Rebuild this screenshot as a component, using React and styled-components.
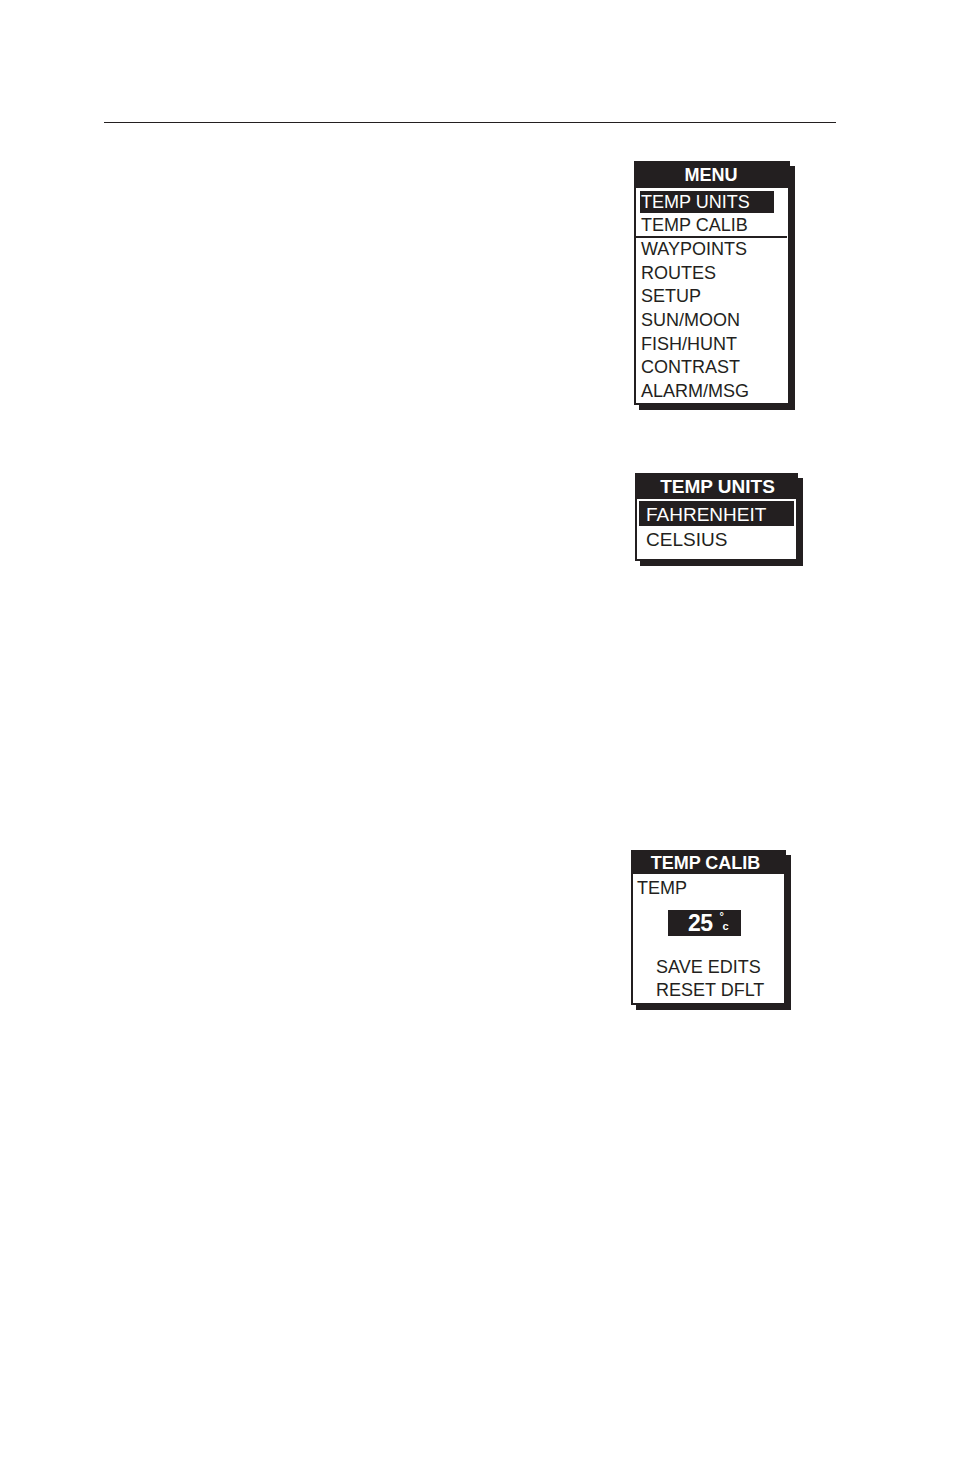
import React from 'react';
import styled, { createGlobalStyle } from 'styled-components';

const ink = '#231f20';

const GlobalStyle = createGlobalStyle`
  * { box-sizing: border-box; }
  html, body {
    margin: 0;
    padding: 0;
    background: #fff;
  }
  body {
    font-family: "Liberation Sans", Arial, sans-serif;
    color: ${ink};
  }
`;

const Page = styled.div`
  width: 954px;
  min-height: 1475px;
  padding-top: 122px;
  display: flex;
  flex-direction: column;
`;

const Rule = styled.div`
  margin-left: 104px;
  width: 732px;
  height: 1px;
  background: ${ink};
`;

const Screen = styled.div`
  margin-left: ${p => p.$left}px;
  margin-top: ${p => p.$top}px;
  width: ${p => p.$width}px;
  height: ${p => p.$height}px;
  border: 2px solid ${ink};
  box-shadow: 5px 5px 0 ${ink};
  background: #fff;
  display: flex;
  flex-direction: column;
`;

const Header = styled.div`
  height: ${p => p.$height}px;
  line-height: ${p => p.$height}px;
  background: ${ink};
  color: #fff;
  font-weight: bold;
  font-size: ${p => p.$size}px;
  text-align: center;
  padding-left: ${p => p.$shiftLeft || 0}px;
  padding-right: ${p => p.$shiftRight || 0}px;
`;

const MenuList = styled.div`
  padding-top: 3px;
  display: flex;
  flex-direction: column;
`;

const MenuRow = styled.div`
  height: 23.6px;
  line-height: ${p => (p.$divider ? 21.6 : 23.6)}px;
  font-size: 18px;
  padding-left: 5px;
  white-space: nowrap;
  border-bottom: ${p => (p.$divider ? `2px solid ${ink}` : 'none')};
  margin-right: ${p => (p.$divider ? 1 : 0)}px;
`;

const MenuHighlight = styled.div`
  margin-left: 4px;
  width: 134px;
  height: 22px;
  line-height: 22px;
  padding-left: 1px;
  margin-bottom: 1.6px;
  background: ${ink};
  color: #fff;
  font-size: 18px;
  white-space: nowrap;
`;

const OptionList = styled.div`
  padding: 2px 2px 0;
  display: flex;
  flex-direction: column;
`;

const Option = styled.div`
  height: 25px;
  padding-top: 1.5px;
  line-height: 24px;
  font-size: 19px;
  padding-left: 7px;
  background: ${p => (p.$selected ? ink : 'transparent')};
  color: ${p => (p.$selected ? '#fff' : ink)};
  white-space: nowrap;
`;

const CalibBody = styled.div`
  display: flex;
  flex-direction: column;
  padding-top: 2px;
`;

const Label = styled.div`
  height: 24px;
  line-height: 24px;
  font-size: 18px;
  padding-left: ${p => p.$indent}px;
  white-space: nowrap;
`;

const ValueBox = styled.div`
  margin: 10px 0 20px 35px;
  width: 73px;
  height: 26px;
  background: ${ink};
  color: #fff;
  display: flex;
  align-items: flex-start;
  padding-left: 20px;
`;

const ValueNumber = styled.span`
  font-weight: bold;
  font-size: 23px;
  line-height: 26px;
  letter-spacing: -0.5px;
`;

const Unit = styled.span`
  position: relative;
  margin-left: 7px;
  font-size: 11px;
  font-weight: bold;
  width: 12px;
  height: 26px;
`;

const Degree = styled.span`
  position: absolute;
  left: 0;
  top: 0;
  font-size: 11px;
`;

const UnitC = styled.span`
  position: absolute;
  left: 3px;
  top: 10px;
`;

const ActionRow = styled.div`
  height: 23px;
  line-height: 23px;
  font-size: 18px;
  padding-left: 23px;
  white-space: nowrap;
`;

const menuItems = ['WAYPOINTS', 'ROUTES', 'SETUP', 'SUN/MOON', 'FISH/HUNT', 'CONTRAST', 'ALARM/MSG'];

export default function App() {
  return (
    <>
      <GlobalStyle />
      <Page>
        <Rule />

        <Screen $left={634} $top={38} $width={156} $height={244}>
          <Header $height={25} $size={18} $shiftRight={2}>MENU</Header>
          <MenuList>
            <MenuHighlight>TEMP UNITS</MenuHighlight>
            <MenuRow $divider>TEMP CALIB</MenuRow>
            {menuItems.map(item => (
              <MenuRow key={item}>{item}</MenuRow>
            ))}
          </MenuList>
        </Screen>

        <Screen $left={635} $top={68} $width={163} $height={88}>
          <Header $height={24} $size={19} $shiftLeft={2}>TEMP UNITS</Header>
          <OptionList>
            <Option $selected>FAHRENHEIT</Option>
            <Option>CELSIUS</Option>
          </OptionList>
        </Screen>

        <Screen $left={631} $top={289} $width={155} $height={155}>
          <Header $height={22} $size={18} $shiftRight={6}>TEMP CALIB</Header>
          <CalibBody>
            <Label $indent={4}>TEMP</Label>
            <ValueBox>
              <ValueNumber>25</ValueNumber>
              <Unit>
                <Degree>°</Degree>
                <UnitC>c</UnitC>
              </Unit>
            </ValueBox>
            <ActionRow>SAVE EDITS</ActionRow>
            <ActionRow>RESET DFLT</ActionRow>
          </CalibBody>
        </Screen>
      </Page>
    </>
  );
}
